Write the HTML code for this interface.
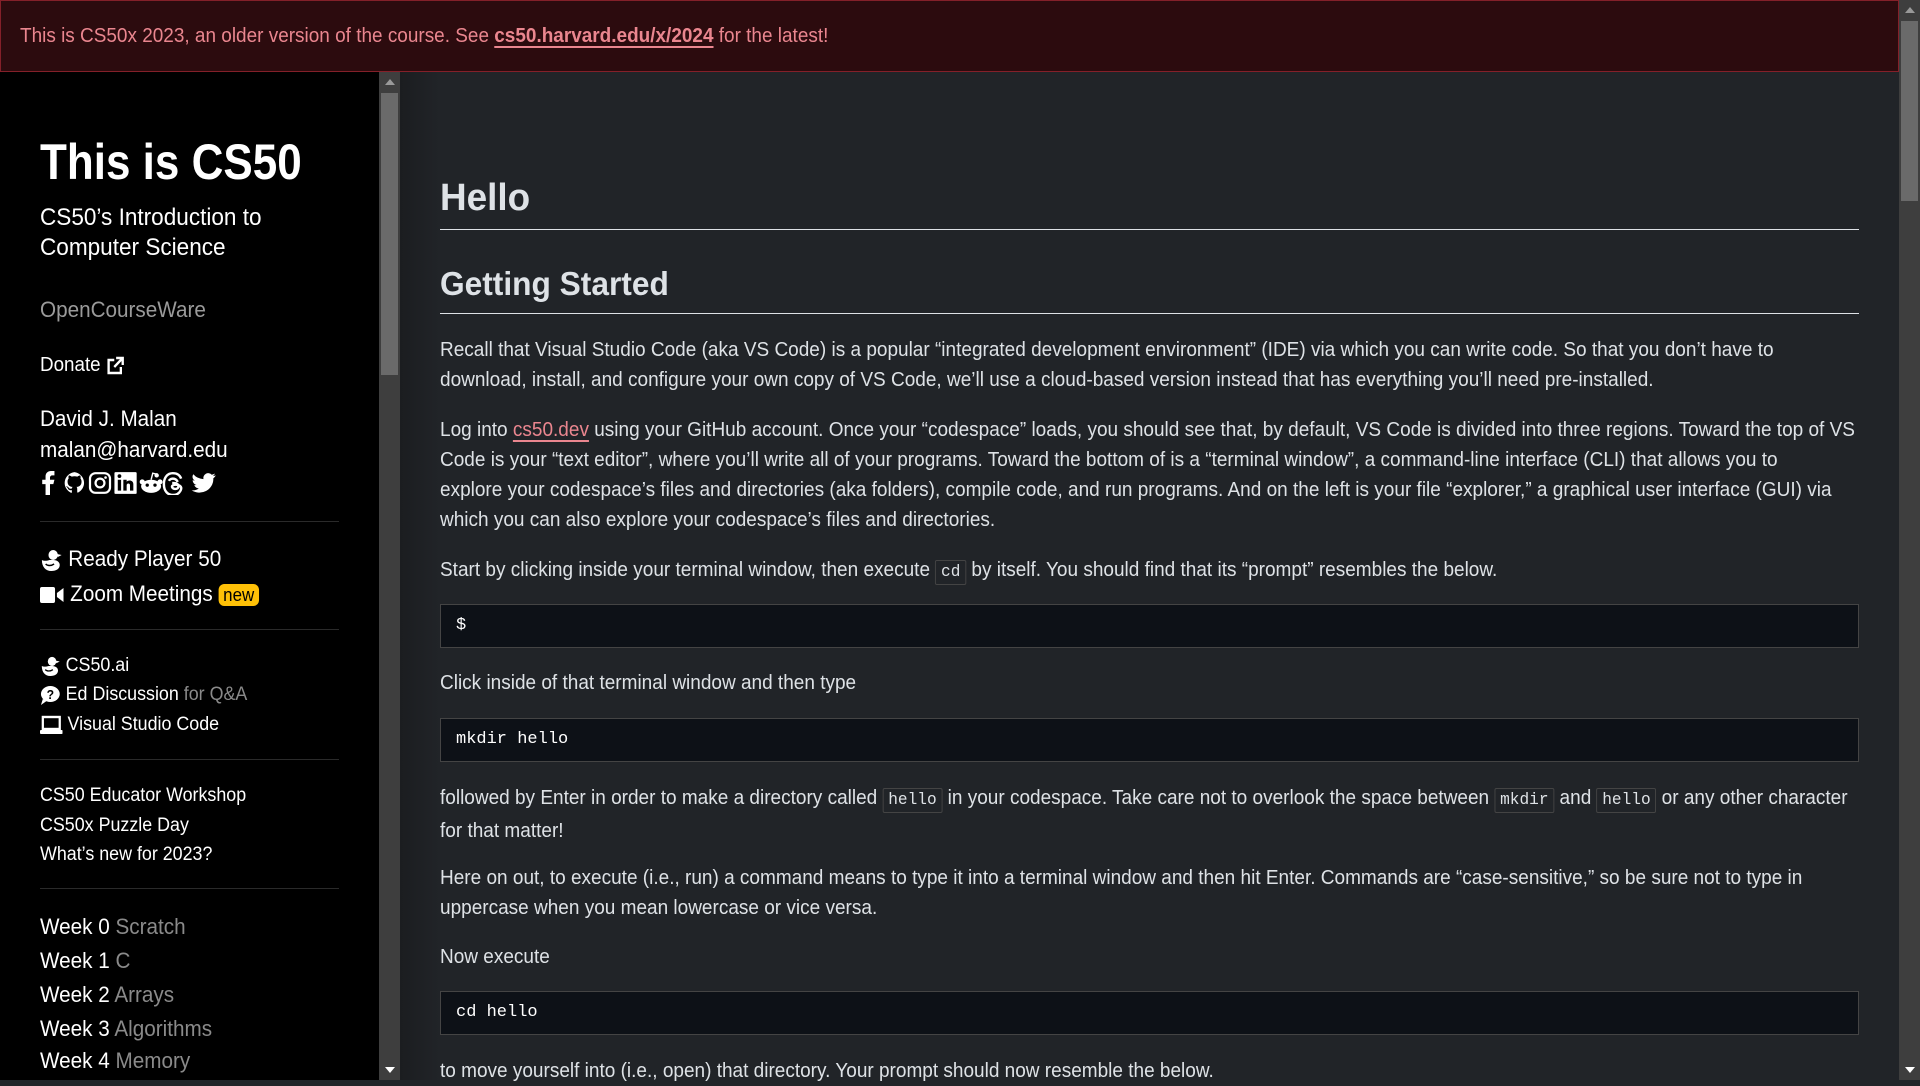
<!DOCTYPE html>
<html><head><meta charset="utf-8"><style>
*{margin:0;padding:0;box-sizing:border-box}
body{width:1920px;height:1080px;overflow:hidden;background:#212428;font-family:"Liberation Sans Narrow","Liberation Sans",sans-serif;color:#dee2e6;position:relative}
.t{position:absolute;white-space:nowrap;transform-origin:0 0}
#banner{position:absolute;left:0;top:0;width:1899px;height:72px;background:#2c0b0e;border:1px solid #842029}
#bt{left:20px;top:21px;color:#ea868f;font-size:20px;line-height:30px;transform:scaleX(0.948)}
#bt a{color:#ea868f;font-weight:bold;text-decoration:underline;text-underline-offset:4px}
#side{position:absolute;left:0;top:72px;width:380px;height:1008px;background:#000;color:#fff}
#sb1{position:absolute;left:379px;top:72px;width:21px;height:1008px;background:#3e3e3e}
#sb1 .th{position:absolute;left:2px;top:21px;width:17px;height:282px;background:#6a6a6a}
#sb2{position:absolute;left:1899px;top:0;width:21px;height:1080px;background:#3e3e3e}
#sb2 .th{position:absolute;left:2px;top:21px;width:17px;height:180px;background:#6a6a6a}
.arr{position:absolute;left:6px;width:0;height:0;border-left:5px solid transparent;border-right:5px solid transparent}
.hr{position:absolute;left:40px;width:299px;height:1px;background:#2a2a2a}
.s .t{color:#fff;transform:scaleX(0.94)}
.g{color:#8a8a8a}
#main{position:absolute;left:400px;top:72px;width:1499px;height:1008px;background:linear-gradient(90deg,#1b1d20 0,#212428 40px)}
.p{font-size:20px;line-height:30px;color:#dee2e6;left:440px;transform:scaleX(0.95)}
.p a{color:#ea868f;text-decoration:underline;text-underline-offset:4px}
code{font-family:"Liberation Mono",monospace;font-size:17px;border:1px solid #444;padding:2px 5px;border-radius:2px}
.cb{position:absolute;left:440px;width:1419px;height:44px;background:#0d1117;border:1px solid #444;font-family:"Liberation Mono",monospace;font-size:17px;line-height:42px;padding-left:15px;color:#fff}
.h{position:absolute;left:440px;width:1419px;height:1px;background:#dee2e6}
svg{vertical-align:middle}
</style></head><body>
<div id="banner"></div>
<div class="t" id="bt">This is CS50x 2023, an older version of the course. See <a>cs50.harvard.edu/x/2024</a> for the latest!</div>

<div id="side"></div>
<div class="s">
<div class="t" style="left:40px;top:132px;font-size:50px;line-height:60px;font-weight:bold;transform:scaleX(0.88)">This is CS50</div>
<div class="t" style="left:40px;top:203px;font-size:24px;line-height:30px">CS50’s Introduction to<br>Computer Science</div>
<div class="t g" style="left:40px;top:295px;font-size:22px;line-height:30px;color:#9a9a9a">OpenCourseWare</div>
<div class="t" style="left:40px;top:350px;font-size:20px;line-height:30px">Donate <svg width="20" height="20" viewBox="0 0 20 20"><path d="M9 4H3v13h13v-6" fill="none" stroke="#fff" stroke-width="2.5"/><path d="M11 2h7v7M18 2l-9 9" fill="none" stroke="#fff" stroke-width="2.5"/></svg></div>
<div class="t" style="left:40px;top:404px;font-size:22px;line-height:30px">David J. Malan</div>
<div class="t" style="left:40px;top:435px;font-size:22px;line-height:30px">malan@harvard.edu</div>
<div style="position:absolute;left:40px;top:471px;height:24px">
<svg width="180" height="24" viewBox="0 0 162 22" fill="#fff" preserveAspectRatio="none">
<path d="M5 22V12H2V8h3V5c0-3 2-5 5-5h3v4h-2c-1 0-2 1-2 2v2h4l-1 4H9v10z"/>
<path d="M31 1a10 10 0 0 0-3 19c.5 0 .7-.2.7-.5v-2c-3 .6-3.5-1.3-3.5-1.3-.5-1.2-1.2-1.5-1.2-1.5-1-.6.1-.6.1-.6 1 .1 1.6 1 1.6 1 1 1.6 2.5 1.1 3 .9.1-.7.4-1.1.7-1.4-2.2-.2-4.6-1.100-4.6-5 0-1.1.4-2 1-2.7-.1-.3-.4-1.3.1-2.7 0 0 .8-.3 2.7 1a9 9 0 0 1 5 0c1.9-1.3 2.7-1 2.7-1 .5 1.4.2 2.4.1 2.7.6.7 1 1.6 1 2.7 0 3.9-2.4 4.8-4.600 5 .4.3.7.9.7 1.9v2.8c0 .3.2.6.7.5A10 10 0 0 0 31 1z"/>
<rect x="45" y="2" width="18" height="18" rx="5" fill="none" stroke="#fff" stroke-width="2"/><circle cx="54" cy="11" r="4" fill="none" stroke="#fff" stroke-width="2"/><circle cx="59" cy="6" r="1.2"/>
<path d="M68 1h18a1 1 0 0 1 1 1v18a1 1 0 0 1-1 1H68a1 1 0 0 1-1-1V2a1 1 0 0 1 1-1zm2 7v10h3V8zm1.5-5a1.7 1.7 0 1 0 0 3.4 1.7 1.7 0 0 0 0-3.4zM75 8v10h3v-5c0-2 3-2 3 0v5h3v-6c0-4-5-4-6-2V8z"/>
<ellipse cx="100" cy="14" rx="9" ry="6"/><circle cx="108" cy="10" r="2.3"/><circle cx="92" cy="10" r="2.3"/><circle cx="105" cy="4" r="2"/><path d="M100 8l1.5-6 4 1" stroke="#fff" stroke-width="1.3" fill="none"/><circle cx="96.5" cy="13" r="1.5" fill="#000"/><circle cx="103.5" cy="13" r="1.5" fill="#000"/>
<path d="M124 10c-1-2-2.5-3-4.5-3-2.5 0-3.5 2-3.5 2M119 11c4 0 6 1 5.5 3.5S120 17 119 15s2.5-3 5.5-2 3 3 2 5c-1.5 3-4 4-7 4-4.5 0-8-3.5-8-10s3.5-10 8-10c4 0 6.5 2 7.5 5" fill="none" stroke="#fff" stroke-width="2.2"/>
<path d="M158 4c-.8.4-1.6.6-2.5.7.9-.5 1.6-1.4 1.9-2.400-.8.5-1.8.9-2.8 1.1a4.4 4.4 0 0 0-7.5 4A12.5 12.5 0 0 1 138 3c-1.4 2-.7 4.6 1.4 5.9-.7 0-1.4-.2-2-.5 0 2.1 1.5 4 3.5 4.4-.6.2-1.3.2-2 .1.6 1.8 2.3 3 4.1 3a8.8 8.8 0 0 1-6.5 1.8A12.5 12.5 0 0 0 156 7.3V6.7c.8-.6 1.5-1.4 2-2.2z"/>
</svg></div>
<div class="hr" style="top:521px"></div>
<div class="t" style="left:40px;top:544px;font-size:22px;line-height:30px"><svg width="24" height="22" viewBox="0 0 24 22" fill="#fff"><circle cx="14" cy="6" r="5"/><path d="M18 5l5 1-4 2zM2 11c2 1 5 1 8 0l4 0c4 0 7 2 7 5 0 4-4 6-9 6-6 0-10-4-10-11z"/><path d="M6 15c2 2 6 2 9 0" stroke="#000" stroke-width="1.5" fill="none"/></svg> Ready Player 50</div>
<div class="t" style="left:40px;top:579px;font-size:22px;line-height:30px"><svg width="26" height="20" viewBox="0 0 26 20" fill="#fff"><rect x="0" y="2" width="16" height="16" rx="2"/><path d="M18 8l7-5v14l-7-5z"/></svg> Zoom Meetings <span style="background:#ffc107;color:#000;border-radius:6px;padding:1px 5px;font-size:18px">new</span></div>
<div class="hr" style="top:629px"></div>
<div class="t" style="left:40px;top:651px;font-size:19px;line-height:30px"><svg width="22" height="20" viewBox="0 0 24 22" fill="#fff"><circle cx="14" cy="6" r="5"/><path d="M18 5l5 1-4 2zM2 11c2 1 5 1 8 0l4 0c4 0 7 2 7 5 0 4-4 6-9 6-6 0-10-4-10-11z"/><path d="M6 15c2 2 6 2 9 0" stroke="#000" stroke-width="1.5" fill="none"/></svg> CS50.ai</div>
<div class="t" style="left:40px;top:680px;font-size:19px;line-height:30px"><svg width="22" height="20" viewBox="0 0 22 20"><ellipse cx="11" cy="9" rx="10" ry="8" fill="#fff"/><path d="M3 14l-2 6 6-4z" fill="#fff"/><text x="11" y="14" font-size="13" font-weight="bold" text-anchor="middle" fill="#000" font-family="Liberation Sans">?</text></svg> Ed Discussion <span class="g">for Q&amp;A</span></div>
<div class="t" style="left:40px;top:710px;font-size:19px;line-height:30px"><svg width="24" height="20" viewBox="0 0 24 20"><rect x="3" y="2" width="18" height="12" fill="none" stroke="#fff" stroke-width="2.4"/><rect x="0" y="15" width="24" height="4" rx="1" fill="#fff"/></svg> Visual Studio Code</div>
<div class="hr" style="top:759px"></div>
<div class="t" style="left:40px;top:781px;font-size:19px;line-height:29.5px">CS50 Educator Workshop<br>CS50x Puzzle Day<br>What’s new for 2023?</div>
<div class="hr" style="top:888px"></div>
<div class="t" style="left:40px;top:912px;font-size:22px;line-height:30px">Week 0 <span class="g">Scratch</span></div>
<div class="t" style="left:40px;top:946px;font-size:22px;line-height:30px">Week 1 <span class="g">C</span></div>
<div class="t" style="left:40px;top:980px;font-size:22px;line-height:30px">Week 2 <span class="g">Arrays</span></div>
<div class="t" style="left:40px;top:1014px;font-size:22px;line-height:30px">Week 3 <span class="g">Algorithms</span></div>
<div class="t" style="left:40px;top:1046px;font-size:22px;line-height:30px">Week 4 <span class="g">Memory</span></div>
</div>
<div id="sb1"><div class="arr" style="top:7px;border-bottom:6px solid #999"></div><div class="th"></div><div class="arr" style="top:995px;border-top:6px solid #fff"></div></div>

<div id="main"></div>
<div class="t" style="left:440px;top:173px;font-size:38px;line-height:50px;font-weight:bold;color:#dee2e6;transform:scaleX(0.97)">Hello</div>
<div class="h" style="top:229px"></div>
<div class="t" style="left:440px;top:261px;font-size:33px;line-height:46px;font-weight:bold;color:#dee2e6;transform:scaleX(0.96)">Getting Started</div>
<div class="h" style="top:313px"></div>
<div class="t p" style="top:335px">Recall that Visual Studio Code (aka VS Code) is a popular “integrated development environment” (IDE) via which you can write code. So that you don’t have to<br>download, install, and configure your own copy of VS Code, we’ll use a cloud-based version instead that has everything you’ll need pre-installed.</div>
<div class="t p" style="top:415px">Log into <a>cs50.dev</a> using your GitHub account. Once your “codespace” loads, you should see that, by default, VS Code is divided into three regions. Toward the top of VS<br>Code is your “text editor”, where you’ll write all of your programs. Toward the bottom of is a “terminal window”, a command-line interface (CLI) that allows you to<br>explore your codespace’s files and directories (aka folders), compile code, and run programs. And on the left is your file “explorer,” a graphical user interface (GUI) via<br>which you can also explore your codespace’s files and directories.</div>
<div class="t p" style="top:555px">Start by clicking inside your terminal window, then execute <code>cd</code> by itself. You should find that its “prompt” resembles the below.</div>
<div class="cb" style="top:604px">$</div>
<div class="t p" style="top:668px">Click inside of that terminal window and then type</div>
<div class="cb" style="top:718px">mkdir hello</div>
<div class="t p" style="top:783px">followed by Enter in order to make a directory called <code>hello</code> in your codespace. Take care not to overlook the space between <code>mkdir</code> and <code>hello</code> or any other character<br>for that matter!</div>
<div class="t p" style="top:863px">Here on out, to execute (i.e., run) a command means to type it into a terminal window and then hit Enter. Commands are “case-sensitive,” so be sure not to type in<br>uppercase when you mean lowercase or vice versa.</div>
<div class="t p" style="top:942px">Now execute</div>
<div class="cb" style="top:991px">cd hello</div>
<div class="t p" style="top:1056px">to move yourself into (i.e., open) that directory. Your prompt should now resemble the below.</div>
<div id="sb2"><div class="arr" style="top:7px;border-bottom:6px solid #999"></div><div class="th"></div><div class="arr" style="top:1067px;border-top:6px solid #fff"></div></div>
</body></html>
